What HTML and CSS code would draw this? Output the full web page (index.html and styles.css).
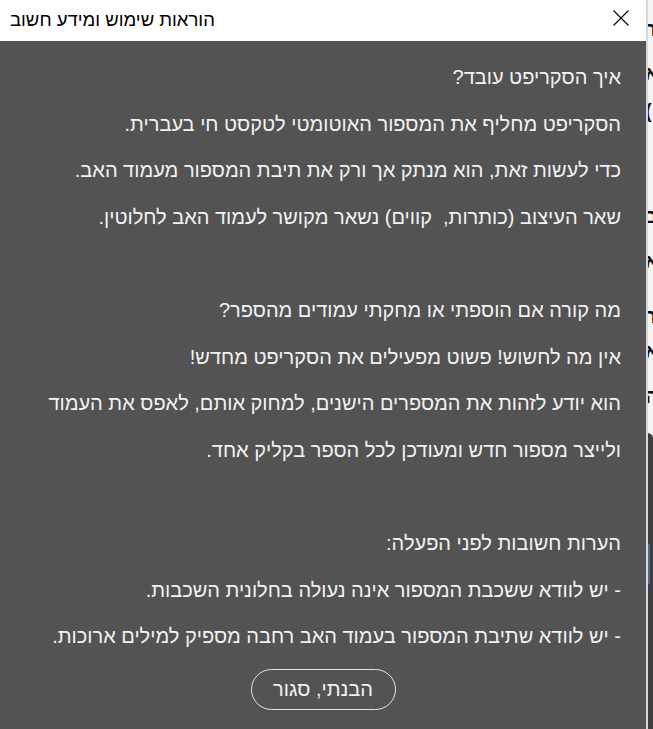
FILE: index.html
```html
<!DOCTYPE html>
<html lang="he">
<head>
<meta charset="utf-8">
<title>הוראות שימוש ומידע חשוב</title>
<link rel="stylesheet" href="styles.css">
</head>
<body>
<div class="screen">
  <div class="dialog">
    <div class="titlebar">
      <span class="title">הוראות שימוש ומידע חשוב</span>
      <span class="close" aria-label="סגור">
        <svg width="16" height="16" viewBox="0 0 16 16"><path d="M0.5 0.5 L15.5 15.5 M15.5 0.5 L0.5 15.5" stroke="#000" stroke-width="1.1" fill="none"/></svg>
      </span>
    </div>
    <div class="content" dir="rtl">
      <p class="line">איך הסקריפט עובד?</p>
      <p class="line">הסקריפט מחליף את המספור האוטומטי לטקסט חי בעברית.</p>
      <p class="line">כדי לעשות זאת, הוא מנתק אך ורק את תיבת המספור מעמוד האב.</p>
      <p class="line">שאר העיצוב (כותרות, &nbsp;קווים) נשאר מקושר לעמוד האב לחלוטין.</p>
      <p class="line"></p>
      <p class="line">מה קורה אם הוספתי או מחקתי עמודים מהספר?</p>
      <p class="line">אין מה לחשוש! פשוט מפעילים את הסקריפט מחדש!</p>
      <p class="line">הוא יודע לזהות את המספרים הישנים, למחוק אותם, לאפס את העמוד</p>
      <p class="line">ולייצר מספור חדש ומעודכן לכל הספר בקליק אחד.</p>
      <p class="line"></p>
      <p class="line">הערות חשובות לפני הפעלה:</p>
      <p class="line">- יש לוודא ששכבת המספור אינה נעולה בחלונית השכבות.</p>
      <p class="line">- יש לוודא שתיבת המספור בעמוד האב רחבה מספיק למילים ארוכות.</p>
      <div class="actions">
        <button class="btn">הבנתי, סגור</button>
      </div>
    </div>
  </div>
  <div class="backdrop">
    <div class="doc">
      <span class="frag f1">ר</span>
      <span class="frag f3">א</span>
      <span class="frag f4">(</span>
      <span class="frag f6">ב</span>
      <span class="frag f7">א</span>
      <span class="frag f9">ר</span>
      <span class="frag f10">א</span>
      <span class="frag f11">ה</span>
    </div>
    <div class="panel">
      <div class="scroll"></div>
    </div>
  </div>
</div>
</body>
</html>
```

FILE: styles.css
```css
html, body {
  margin: 0;
  padding: 0;
  height: 100%;
  overflow: hidden;
}

.screen {
  display: flex;
  width: 653px;
  height: 729px;
}

.dialog {
  width: 646px;
  flex: none;
  display: flex;
  flex-direction: column;
  background: #535353;
  font-family: "Liberation Sans", "DejaVu Sans", sans-serif;
}

.titlebar {
  height: 41px;
  flex: none;
  background: #ffffff;
  display: flex;
  align-items: center;
  justify-content: space-between;
  padding: 0 17px 0 10px;
}

.title {
  font-size: 18.5px;
  color: #000;
  position: relative;
  top: -1px;
}

.close {
  display: flex;
  width: 16px;
  height: 16px;
  position: relative;
  top: -3px;
}

.content {
  flex: 1;
  padding: 13px 25px 0 20px;
  color: #f2f2f2;
  font-size: 20px;
}

.line {
  margin: 0;
  height: 46.6px;
  line-height: 46.6px;
  white-space: nowrap;
}

.actions {
  display: flex;
  justify-content: center;
  padding-top: 9px;
}

.btn {
  width: 145px;
  height: 41px;
  border: 1px solid #e6e6e6;
  border-radius: 21px;
  background: transparent;
  color: #f2f2f2;
  font-family: "Liberation Sans", "DejaVu Sans", sans-serif;
  font-size: 20px;
  padding: 0;
  margin-left: 5px;
}

.backdrop {
  flex: 1;
  display: flex;
  flex-direction: column;
  border-left: 2px solid #d8d8d8;
  overflow: hidden;
}

.doc {
  height: 433px;
  background: #f4f4f4;
  position: relative;
  overflow: hidden;
}

.frag {
  position: absolute;
  left: -3px;
  font-family: "Liberation Sans", sans-serif;
  font-size: 20px;
  line-height: 22px;
  font-weight: bold;
  color: #111;
}
.f1 { top: 18px; }
.f3 { top: 62px; }
.f4 { top: 100px; }
.f6 { top: 205px; }
.f7 { top: 250px; }
.f9 { top: 305px; }
.f10 { top: 340px; }
.f11 { top: 385px; }

.panel {
  flex: 1;
  background: #3f3f3f;
  border-top: 1px solid #666;
  border-top-right-radius: 6px;
  position: relative;
}

.scroll {
  position: absolute;
  left: 0;
  top: 110px;
  width: 2px;
  height: 40px;
  background: #4a6a8a;
}
```
